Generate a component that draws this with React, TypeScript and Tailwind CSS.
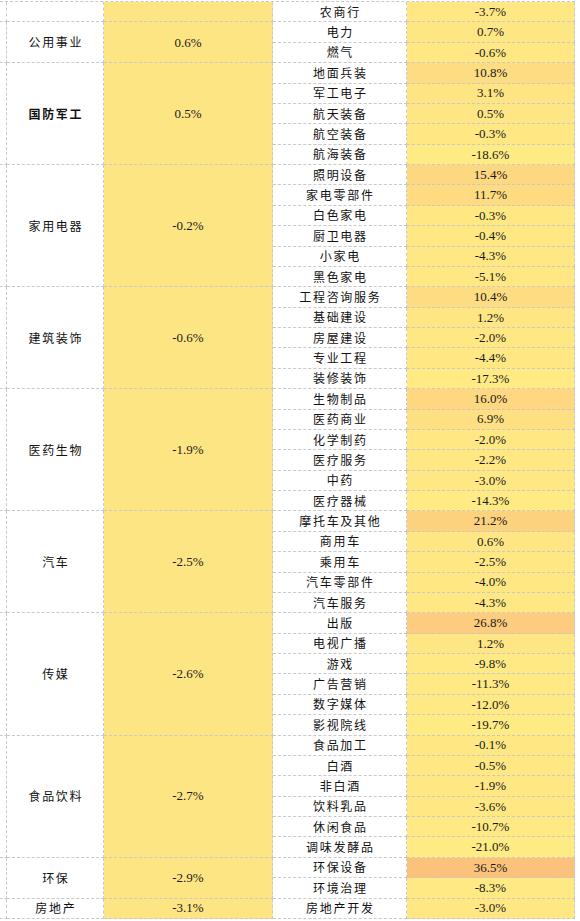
import React from "react";

type Sub = { name: string; value: number };
type Group = { name: string; value: number | null; bold?: boolean; subs: Sub[] };

const groups: Group[] = [
  { name: "", value: null, subs: [{ name: "农商行", value: -3.7 }] },
  {
    name: "公用事业",
    value: 0.6,
    subs: [
      { name: "电力", value: 0.7 },
      { name: "燃气", value: -0.6 },
    ],
  },
  {
    name: "国防军工",
    value: 0.5,
    bold: true,
    subs: [
      { name: "地面兵装", value: 10.8 },
      { name: "军工电子", value: 3.1 },
      { name: "航天装备", value: 0.5 },
      { name: "航空装备", value: -0.3 },
      { name: "航海装备", value: -18.6 },
    ],
  },
  {
    name: "家用电器",
    value: -0.2,
    subs: [
      { name: "照明设备", value: 15.4 },
      { name: "家电零部件", value: 11.7 },
      { name: "白色家电", value: -0.3 },
      { name: "厨卫电器", value: -0.4 },
      { name: "小家电", value: -4.3 },
      { name: "黑色家电", value: -5.1 },
    ],
  },
  {
    name: "建筑装饰",
    value: -0.6,
    subs: [
      { name: "工程咨询服务", value: 10.4 },
      { name: "基础建设", value: 1.2 },
      { name: "房屋建设", value: -2.0 },
      { name: "专业工程", value: -4.4 },
      { name: "装修装饰", value: -17.3 },
    ],
  },
  {
    name: "医药生物",
    value: -1.9,
    subs: [
      { name: "生物制品", value: 16.0 },
      { name: "医药商业", value: 6.9 },
      { name: "化学制药", value: -2.0 },
      { name: "医疗服务", value: -2.2 },
      { name: "中药", value: -3.0 },
      { name: "医疗器械", value: -14.3 },
    ],
  },
  {
    name: "汽车",
    value: -2.5,
    subs: [
      { name: "摩托车及其他", value: 21.2 },
      { name: "商用车", value: 0.6 },
      { name: "乘用车", value: -2.5 },
      { name: "汽车零部件", value: -4.0 },
      { name: "汽车服务", value: -4.3 },
    ],
  },
  {
    name: "传媒",
    value: -2.6,
    subs: [
      { name: "出版", value: 26.8 },
      { name: "电视广播", value: 1.2 },
      { name: "游戏", value: -9.8 },
      { name: "广告营销", value: -11.3 },
      { name: "数字媒体", value: -12.0 },
      { name: "影视院线", value: -19.7 },
    ],
  },
  {
    name: "食品饮料",
    value: -2.7,
    subs: [
      { name: "食品加工", value: -0.1 },
      { name: "白酒", value: -0.5 },
      { name: "非白酒", value: -1.9 },
      { name: "饮料乳品", value: -3.6 },
      { name: "休闲食品", value: -10.7 },
      { name: "调味发酵品", value: -21.0 },
    ],
  },
  {
    name: "环保",
    value: -2.9,
    subs: [
      { name: "环保设备", value: 36.5 },
      { name: "环境治理", value: -8.3 },
    ],
  },
  { name: "房地产", value: -3.1, subs: [{ name: "房地产开发", value: -3.0 }] },
];

const mix = (a: number[], b: number[], t: number) =>
  a.map((x, i) => Math.round(x + (b[i] - x) * t));

// yellow at the bottom, orange only for the strong gainers
function scale(v: number) {
  const low = [255, 235, 132];
  const mid = [255, 231, 132];
  const high = [252, 194, 124];
  const c = v <= 0 ? mix(low, mid, (v + 21) / 21) : mix(mid, high, Math.min(1, v / 36.5));
  return `rgb(${c[0]},${c[1]},${c[2]})`;
}

const fmt = (v: number) => `${v.toFixed(1)}%`;

const cell = "border-b border-r border-dashed border-[#c9c9c9] flex items-center justify-center";
const cjk = "font-['Noto_Sans_CJK_SC',sans-serif] text-[12px] tracking-[1.7px] pl-[1.7px] text-[#111]";
const num = "font-['Liberation_Serif',serif] text-[13px] text-[#1a1a1a]";

export default function App() {
  let row = 1;
  const cells: React.ReactNode[] = [];

  groups.forEach((g, gi) => {
    const span = { gridRow: `${row} / ${row + g.subs.length}` };

    cells.push(
      <div key={`l${gi}`} className="border-b border-r border-dashed border-[#c9c9c9]" style={{ ...span, gridColumn: 1 }} />
    );
    cells.push(
      <div key={`n${gi}`} className={`${cell} bg-white`} style={{ ...span, gridColumn: 2 }}>
        <span className={`${cjk} ${g.bold ? "font-bold" : ""}`}>{g.name}</span>
      </div>
    );
    cells.push(
      <div key={`v${gi}`} className={`${cell} bg-[#fee584]`} style={{ ...span, gridColumn: 3 }}>
        <span className={num}>{g.value === null ? "" : fmt(g.value)}</span>
      </div>
    );

    g.subs.forEach((s, si) => {
      const r = { gridRow: `${row} / ${row + 1}` };
      cells.push(
        <div key={`sn${gi}-${si}`} className={`${cell} bg-white`} style={{ ...r, gridColumn: 4 }}>
          <span className={cjk}>{s.name}</span>
        </div>
      );
      cells.push(
        <div key={`sv${gi}-${si}`} className={cell} style={{ ...r, gridColumn: 5, backgroundColor: scale(s.value) }}>
          <span className={num}>{fmt(s.value)}</span>
        </div>
      );
      row++;
    });
  });

  return (
    <div className="w-[580px] h-[921px] bg-white pt-px overflow-hidden">
      <div className="grid grid-cols-[7px_97px_169px_134px_168px] grid-rows-[repeat(45,20.38px)] border-t border-dashed border-[#c9c9c9] w-[575px]">
        {cells}
      </div>
    </div>
  );
}
